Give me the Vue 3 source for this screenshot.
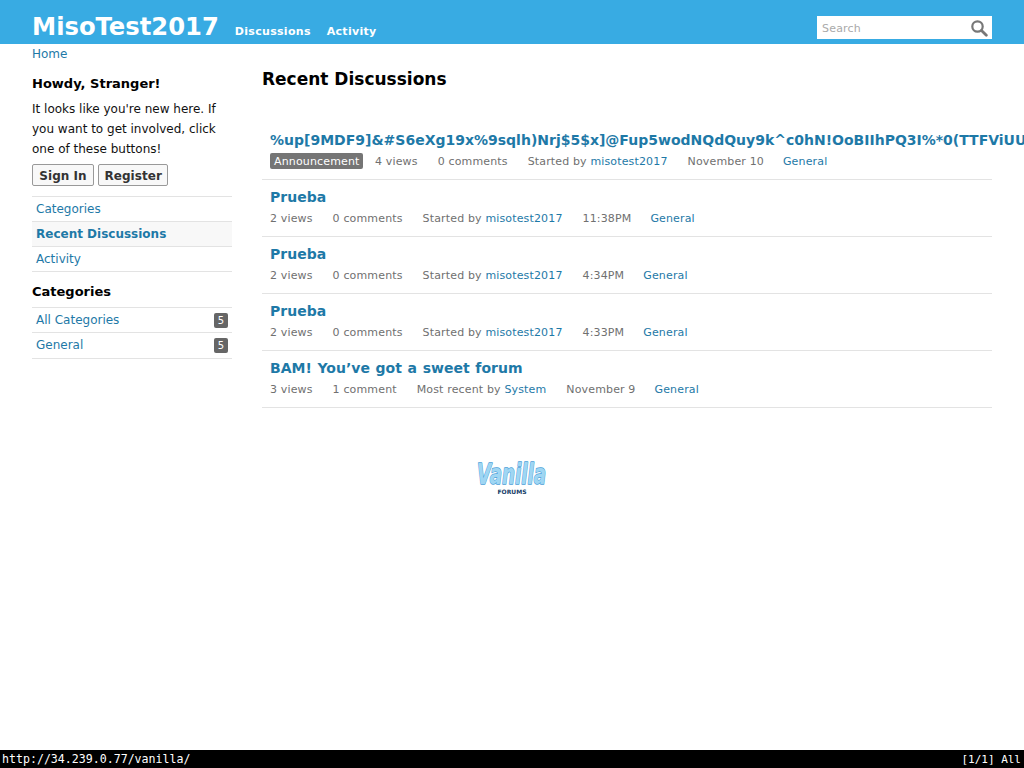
<script setup>
const sideNav = [
  { label: 'Categories' },
  { label: 'Recent Discussions', active: true },
  { label: 'Activity' }
]
const categories = [
  { label: 'All Categories', count: 5 },
  { label: 'General', count: 5 }
]
const discussions = [
  {
    title: '%up[9MDF9]&#S6eXg19x%9sqlh)Nrj$5$x]@Fup5wodNQdQuy9k^c0hN!OoBIIhPQ3I%*0(TTFViUUxkq',
    tag: 'Announcement', views: '4 views', comments: '0 comments',
    by: 'Started by', user: 'misotest2017', date: 'November 10'
  },
  { title: 'Prueba', views: '2 views', comments: '0 comments', by: 'Started by', user: 'misotest2017', date: '11:38PM' },
  { title: 'Prueba', views: '2 views', comments: '0 comments', by: 'Started by', user: 'misotest2017', date: '4:34PM' },
  { title: 'Prueba', views: '2 views', comments: '0 comments', by: 'Started by', user: 'misotest2017', date: '4:33PM' },
  { title: 'BAM! You’ve got a sweet forum', views: '3 views', comments: '1 comment', by: 'Most recent by', user: 'System', date: 'November 9' }
]
</script>

<template>
  <div class="page">
    <header class="top">
      <div class="brand">MisoTest2017</div>
      <nav class="top-nav">
        <a>Discussions</a>
        <a>Activity</a>
      </nav>
      <div class="search">
        <span class="search-text">Search</span>
        <svg class="search-icon" width="18" height="18" viewBox="0 0 18 18">
          <circle cx="7.5" cy="7.5" r="5.2" fill="none" stroke="#777" stroke-width="2.2" />
          <path d="M11.5 11.5 L16.3 16.3" stroke="#777" stroke-width="2.8" stroke-linecap="round" />
        </svg>
      </div>
    </header>

    <div class="content">
      <div class="crumbs"><a>Home</a></div>
      <div class="columns">
        <aside class="side">
          <h4 class="side-title">Howdy, Stranger!</h4>
          <p class="intro">It looks like you're new here. If you want to get involved, click one of these buttons!</p>
          <div class="buttons">
            <button class="btn">Sign In</button>
            <button class="btn">Register</button>
          </div>
          <ul class="side-list">
            <li v-for="item in sideNav" :key="item.label" :class="{ active: item.active }">
              <a>{{ item.label }}</a>
            </li>
          </ul>
          <h4 class="side-title cats">Categories</h4>
          <ul class="side-list cat-list">
            <li v-for="cat in categories" :key="cat.label">
              <a>{{ cat.label }}</a>
              <span class="count">{{ cat.count }}</span>
            </li>
          </ul>
        </aside>

        <main class="main">
          <h1 class="heading">Recent Discussions</h1>
          <ul class="list">
            <li v-for="(d, i) in discussions" :key="i" class="item">
              <a class="item-title">{{ d.title }}</a>
              <div class="meta">
                <span v-if="d.tag" class="tag">{{ d.tag }}</span>
                <span>{{ d.views }}</span>
                <span>{{ d.comments }}</span>
                <span>{{ d.by }} <a>{{ d.user }}</a></span>
                <span class="date">{{ d.date }}</span>
                <a>General</a>
              </div>
            </li>
          </ul>
        </main>
      </div>
      <div class="powered">
        <svg class="logo" width="72" height="36" viewBox="0 0 72 36">
          <text x="1" y="24" textLength="69" lengthAdjust="spacingAndGlyphs" class="logo-word">Vanilla</text>
          <text x="36" y="34" text-anchor="middle" class="logo-sub">FORUMS</text>
        </svg>
      </div>
    </div>

    <footer class="status">
      <span>http://34.239.0.77/vanilla/</span>
      <span class="pos">[1/1] All</span>
    </footer>
  </div>
</template>

<style>
html, body { margin: 0; overflow: hidden; }
</style>

<style scoped>
.page {
  width: 1024px;
  height: 768px;
  display: flex;
  flex-direction: column;
  overflow: hidden;
  background: #fff;
  font-family: "DejaVu Sans", sans-serif;
  font-size: 12px;
  color: #000;
}
a { color: #1e79a7; }
ul { list-style: none; margin: 0; padding: 0; }

.top {
  height: 44px;
  flex: none;
  box-sizing: border-box;
  padding: 0 32px;
  display: flex;
  align-items: flex-start;
  background: #38abe3;
  color: #fff;
}
.brand {
  font-size: 24.25px;
  font-weight: bold;
  line-height: 28px;
  margin-top: 13px;
}
.top-nav {
  display: flex;
  gap: 16px;
  margin: 25px 0 0 16px;
  font-size: 11px;
  font-weight: bold;
  line-height: 14px;
  letter-spacing: 0.3px;
}
.top-nav a { color: #fff; }
.search {
  margin: 16px 0 0 auto;
  width: 175px;
  height: 23px;
  box-sizing: border-box;
  padding: 1px 4px 0 5px;
  display: flex;
  align-items: center;
  justify-content: space-between;
  background: #fff;
}
.search-text { font-size: 11px; color: #aaa; letter-spacing: 0.2px; }
.search-icon { display: block; }

.content { flex: 1; min-height: 0; padding: 0 32px; }
.crumbs { height: 20px; line-height: 20px; }
.columns { display: flex; gap: 30px; }

.side { width: 200px; flex: none; }
.side-title {
  margin: 0;
  padding-top: 11px;
  font-size: 13px;
  line-height: 18px;
  font-weight: bold;
}
.intro { margin: 6px 0 0; line-height: 20px; color: #111; }
.buttons { display: flex; gap: 4px; margin-top: 5px; }
.btn {
  height: 22px;
  min-width: 62px;
  padding: 2px 5.5px 0;
  box-sizing: border-box;
  border: 1px solid #999;
  border-radius: 2px;
  background: #f8f8f8;
  color: #333;
  font-family: inherit;
  font-size: 12px;
  font-weight: bold;
  letter-spacing: 0.05px;
}
.side-list { margin-top: 10px; border-top: 1px solid #e3e3e3; }
.side-list.cat-list { margin-top: 6px; }
.side-list li {
  height: 24px;
  padding: 0 4px;
  display: flex;
  align-items: center;
  justify-content: space-between;
  border-bottom: 1px solid #e3e3e3;
}
.cat-list li:last-child { height: 25px; padding-bottom: 1px; box-sizing: content-box; height: 24px; }
.side-list li.active { background: #f8f8f8; font-weight: bold; }
.count {
  width: 14px;
  height: 15px;
  border-radius: 2px;
  background: #666;
  color: #fff;
  font-size: 10px;
  line-height: 15px;
  text-align: center;
}

.main { width: 730px; flex: none; }
.heading {
  margin: 4px 0 0;
  font-size: 17px;
  line-height: 22px;
  font-weight: bold;
}
.list { margin-top: 33px; }
.item {
  height: 56px;
  padding: 0 8px;
  border-bottom: 1px solid #e3e3e3;
  white-space: nowrap;
}
.item-title {
  display: block;
  padding-top: 8px;
  font-size: 14px;
  line-height: 18px;
  font-weight: bold;
  word-spacing: 0.8px;
}
.meta {
  display: flex;
  align-items: center;
  gap: 20px;
  margin-top: 3px;
  height: 18px;
  font-size: 11px;
  color: #707070;
  letter-spacing: 0.15px;
}
.date { margin-right: -1px; }
.tag {
  margin-right: -8px;
  padding: 1px 3.5px 0 4px;
  height: 15px;
  line-height: 15px;
  border-radius: 2px;
  background: #757575;
  color: #fff;
}
.powered { display: flex; justify-content: center; margin-top: 52px; }
.logo { overflow: visible; }
.logo-word {
  font-family: "DejaVu Sans", sans-serif;
  font-style: italic;
  font-weight: bold;
  font-size: 28px;
  fill: #9fd6f3;
  stroke: #4a9ed8;
  stroke-width: 1.4px;
  stroke-linejoin: round;
  paint-order: stroke;
}
.logo-sub {
  font-size: 6px;
  font-weight: bold;
  fill: #123a66;
}

.status {
  height: 18px;
  flex: none;
  padding: 0 3px 0 2px;
  display: flex;
  align-items: center;
  justify-content: space-between;
  background: #000;
  color: #fff;
  font-family: "DejaVu Sans Mono", monospace;
  font-size: 11.6px;
}
.pos { font-size: 11px; }
</style>
